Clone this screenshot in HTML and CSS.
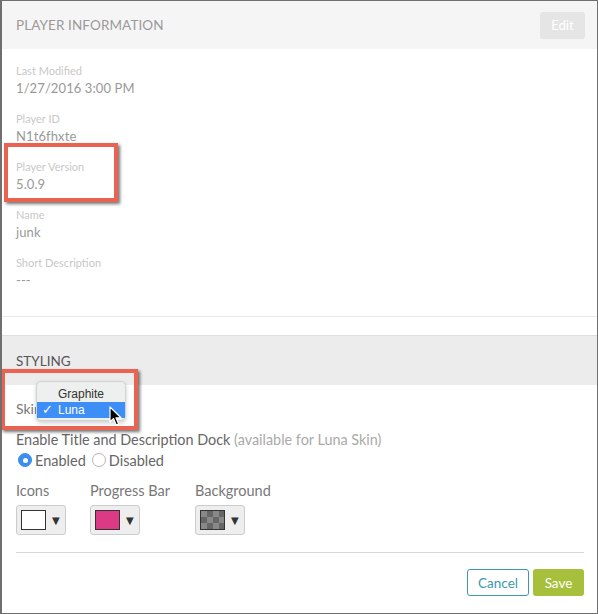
FILE: index.html
```html
<!DOCTYPE html>
<html>
<head>
<meta charset="utf-8">
<link rel="stylesheet" href="styles.css">
</head>
<body>
<div class="frame">
  <div class="panel-head">
    <div class="panel-title">PLAYER INFORMATION</div>
    <button class="btn-edit">Edit</button>
  </div>
  <div class="info">
    <div class="field"><div class="label">Last Modified</div><div class="value">1/27/2016 3:00 PM</div></div>
    <div class="field"><div class="label">Player ID</div><div class="value">N1t6fhxte</div></div>
    <div class="field"><div class="label">Player Version</div><div class="value">5.0.9</div></div>
    <div class="field"><div class="label">Name</div><div class="value">junk</div></div>
    <div class="field"><div class="label">Short Description</div><div class="value">---</div></div>
  </div>
  <div class="spacer"></div>
  <div class="styling-head">STYLING</div>
  <div class="styling">
    <div class="skin-row">Skin</div>
    <div class="dock">Enable Title and Description Dock <span class="muted">(available for Luna Skin)</span></div>
    <div class="radios">
      <label class="radio"><span class="dot on"></span>Enabled</label>
      <label class="radio"><span class="dot"></span>Disabled</label>
    </div>
    <div class="colors">
      <div class="color-col col-icons">
        <div class="color-label">Icons</div>
        <div class="picker"><span class="swatch sw-white"></span><span class="caret">▼</span></div>
      </div>
      <div class="color-col col-progress">
        <div class="color-label">Progress Bar</div>
        <div class="picker"><span class="swatch sw-pink"></span><span class="caret">▼</span></div>
      </div>
      <div class="color-col">
        <div class="color-label">Background</div>
        <div class="picker"><span class="swatch sw-check"></span><span class="caret">▼</span></div>
      </div>
    </div>
    <div class="footer">
      <button class="btn-cancel">Cancel</button>
      <button class="btn-save">Save</button>
    </div>
  </div>

  <div class="annot annot-version"></div>
  <div class="annot annot-skin"></div>
  <div class="menu">
    <div class="menu-item">Graphite</div>
    <div class="menu-item sel"><span class="check">✓</span>Luna</div>
  </div>
  <svg class="cursor" width="14" height="21" viewBox="0 0 14 21">
    <path d="M1 1 L1 16 L4.5 12.5 L7.2 19 L9.6 18 L7 11.8 L12 11.8 Z" fill="#000" stroke="#fff" stroke-width="1.2" stroke-linejoin="round"/>
  </svg>
</div>
</body>
</html>
```
FILE: styles.css
```css
* { box-sizing: border-box; }
html, body { margin: 0; padding: 0; background: #fff; }
body { font-family: "Lato", "Noto Sans", sans-serif; }
.frame {
  position: relative;
  width: 598px;
  height: 614px;
  border: 1px solid #6f6f6f;
  border-left: 2px solid #6f6f6f;
  background: #fff;
  overflow: hidden;
}
.panel-head {
  height: 48px;
  background: #f5f5f5;
  display: flex;
  align-items: center;
  justify-content: space-between;
  padding: 0 12px 0 14px;
}
.panel-title { font-size: 13.5px; color: #9a9a9a; letter-spacing: 0.1px; }
.btn-edit {
  width: 45px; height: 27px;
  border: none; border-radius: 3px;
  background: #e5e5e5; color: #fff;
  font-family: inherit; font-size: 13px;
  padding: 0;
}
.info { padding: 15px 14px 26px; border-bottom: 1px solid #eaeaea; }
.field { margin-bottom: 14px; }
.field:last-child { margin-bottom: 0; }
.label { font-size: 11px; line-height: 14px; color: #c8c8c8; }
.value { font-size: 13px; line-height: 20px; color: #999; letter-spacing: 0.1px; }
.spacer { height: 18px; }
.styling-head {
  height: 50px;
  background: #ececec;
  border-top: 1px solid #dedede;
  font-size: 13.5px; color: #555;
  padding: 0 14px;
  display: flex; align-items: center;
}
.styling { padding: 0 13px 0 14px; }
.skin-row { height: 46px; display: flex; align-items: center; font-size: 14px; color: #777; }
.dock { font-size: 14.4px; color: #666; line-height: 18px; }
.muted { color: #aaa; }
.radios { display: flex; gap: 6px; margin-top: 1px; height: 20px; align-items: center; padding-left: 2px; }
.radio { display: flex; align-items: center; font-size: 14.5px; color: #666; }
.dot {
  width: 14px; height: 14px; border-radius: 50%;
  border: 1px solid #b5b5b5; background: #fff; margin-right: 3px;
  display: inline-flex; align-items: center; justify-content: center;
}
.dot.on { background: #3a8ef0; border-color: #3a8ef0; }
.dot.on::after { content: ""; width: 5px; height: 5px; border-radius: 50%; background: #fff; }
.colors { display: flex; margin-top: 12px; }
.col-icons { width: 74px; }
.col-progress { width: 105px; }
.color-label { font-size: 14.5px; color: #777; line-height: 18px; margin-bottom: 5px; }
.picker {
  width: 50px; height: 30px;
  background: #eee; border: 1px solid #ccc; border-radius: 3px;
  display: flex; align-items: center; padding-left: 4px;
}
.swatch { width: 25px; height: 20px; border: 1px solid #333; display: block; }
.sw-white { background: #fff; }
.sw-pink { background: #dc3a85; }
.sw-check {
  background-color: #888;
  background-image:
    linear-gradient(45deg, #666 25%, transparent 25%, transparent 75%, #666 75%),
    linear-gradient(45deg, #666 25%, transparent 25%, transparent 75%, #666 75%);
  background-size: 12px 12px;
  background-position: 0 0, 6px 6px;
}
.caret { font-size: 10px; color: #333; margin-left: 6px; font-family: "DejaVu Sans", sans-serif; }
.footer {
  margin-top: 17px;
  border-top: 1px solid #d8d8d8;
  padding-top: 16px;
  display: flex; justify-content: flex-end; gap: 4px;
}
.btn-cancel {
  width: 62px; height: 27px;
  border: 1px solid #3a9aab; border-radius: 3px;
  background: #fff; color: #3a9aab;
  font-family: inherit; font-size: 13.5px; padding: 0;
}
.btn-save {
  width: 51px; height: 27px;
  border: none; border-radius: 3px;
  background: #a6c03c; color: #fff;
  font-family: inherit; font-size: 13.5px; padding: 0;
}
.annot {
  position: absolute;
  border: 4px solid #ea6250;
  box-shadow: 2px 2px 3px rgba(0,0,0,0.55);
}
.annot-version { left: 2px; top: 142px; width: 114px; height: 59px; }
.annot-skin { left: -1px; top: 368px; width: 137px; height: 61px; }
.menu {
  position: absolute;
  left: 34px; top: 380px;
  width: 90px; height: 40px;
  background: #edf0ee;
  border: 1px solid #cfd3d1;
  border-radius: 5px;
  box-shadow: 0 2px 4px rgba(0,0,0,0.2);
  padding-top: 4px;
  font-family: "Liberation Sans", sans-serif;
  font-size: 12px;
}
.menu-item { height: 16px; line-height: 16px; padding-left: 21px; color: #333; position: relative; }
.menu-item.sel { background: #3d8ef6; color: #fff; }
.check { position: absolute; left: 5px; top: 0; font-size: 13px; font-family: "DejaVu Sans", sans-serif; }
.cursor { position: absolute; left: 107px; top: 405px; }
```
